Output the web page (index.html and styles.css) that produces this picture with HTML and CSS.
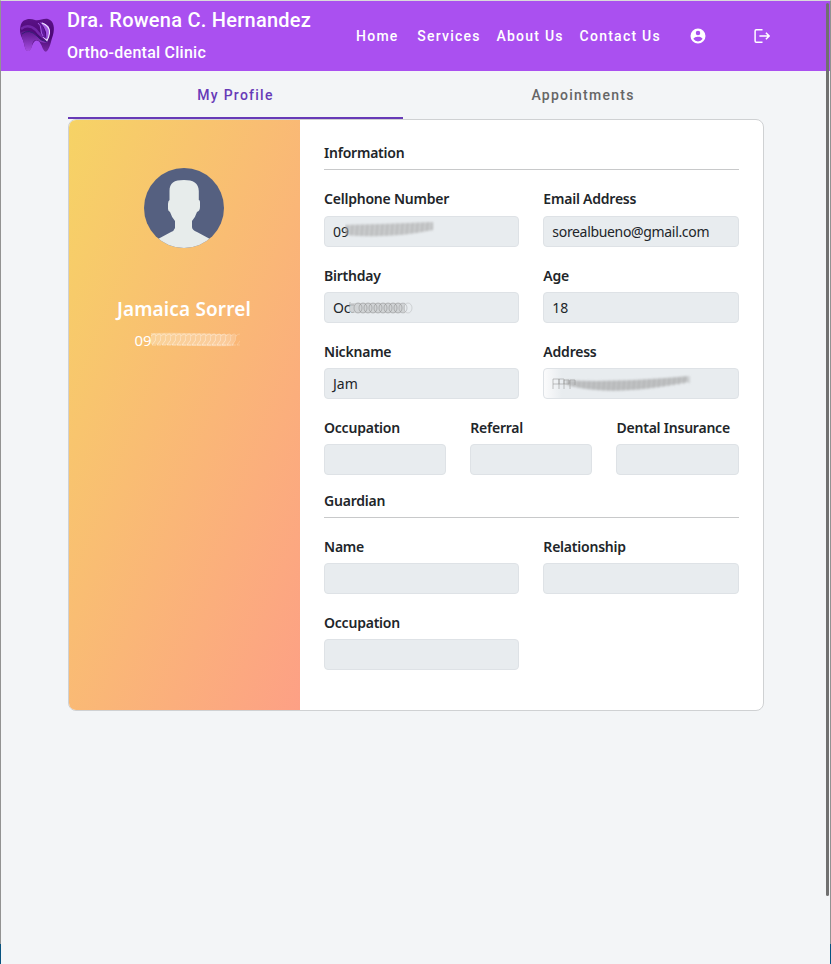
FILE: index.html
```html
<!DOCTYPE html>
<html lang="en">
<head>
<meta charset="utf-8">
<title>Dra. Rowena C. Hernandez</title>
<link rel="stylesheet" href="styles.css">
</head>
<body>
<div class="app">
  <header class="navbar">
    <svg class="logo" viewBox="0 0 36 36">
      <defs>
        <linearGradient id="tooth" x1="0" y1="0" x2="0" y2="1"><stop offset="0" stop-color="#5b1287"/><stop offset=".55" stop-color="#4b0775"/><stop offset="1" stop-color="#782aa4"/></linearGradient>
        <linearGradient id="root" x1="0" y1="0" x2="0" y2="1"><stop offset="0" stop-color="#5b1589"/><stop offset="1" stop-color="#a64de2"/></linearGradient>
      </defs>
      <path d="M1.500 8C3 1 10 0 16 2C20 3 25 0 29 1C35 3 36 10 34 17C32 23 31 30 28 33Q26 35 24 31C22 26 20 21 16 23C13 25 13 31 10 33C5 34 6 25 3 20Q0 14 1.500 8Z" fill="url(#tooth)"/>
      <path d="M2 14Q12 10 19 19C21 22 23 22 29 24Q23 26 18 22C11 22 15 31 10 33C5 34 6 25 3 20Z" fill="url(#root)"/>
      <path d="M2 11Q9 5 17 12Q22 19 28 21" fill="none" stroke="#7226a8" stroke-width="2.500"/>
      <path d="M3 16Q10 10 18 18Q22 23 28 24" fill="none" stroke="#351e75" stroke-width="1"/>
      <path d="M21 4Q31 6 31 14Q30 19 28 23Q27 19 27 14Q25 8 21 4Z" fill="#a45be3"/>
      <path d="M23 5Q31 8 30.500 15Q30 19 28 22.500Q26 20.500 24 18.500" fill="none" stroke="#eee5ff" stroke-width="1.100"/>
      <path d="M20 4Q26 9 27 21Q20 17 22 11Q22 7 20 4Z" fill="#6218a0"/>
      <path d="M19 5Q22 7 22 12Q22 15 24 18" fill="none" stroke="#a45be3" stroke-width="1"/>
    </svg>
    <div class="brand">
      <div class="brand-name">Dra. Rowena C. Hernandez</div>
      <div class="brand-sub">Ortho-dental Clinic</div>
    </div>
    <nav class="links"><a>Home</a><a>Services</a><a>About Us</a><a>Contact Us</a></nav>
    <svg class="icon account" viewBox="0 0 24 24"><path fill="#fff" fill-rule="evenodd" d="M12 2a10 10 0 1 0 0 20 10 10 0 0 0 0-20zm0 3a3 3 0 1 1 0 6 3 3 0 0 1 0-6zm0 14.200a7.200 7.200 0 0 1-6-3.220c.03-1.990 4-3.080 6-3.080s5.970 1.090 6 3.080a7.200 7.200 0 0 1-6 3.220z"/></svg>
    <svg class="icon logout" viewBox="0 0 16 16"><path d="M8.500 1.800H2.200Q1.100 1.800 1.100 2.900V13.100Q1.100 14.200 2.200 14.200H8.500M5.400 8H15M11.900 4.800 15.100 8l-3.200 3.200" fill="none" stroke="#fff" stroke-width="1.500"/></svg>
  </header>
  <div class="tabs"><div class="tab active">My Profile</div><div class="tab">Appointments</div></div>
  <main class="card">
    <aside class="profile">
      <svg class="avatar" viewBox="0 0 80 80">
        <clipPath id="disc"><circle cx="40" cy="40" r="40"/></clipPath>
        <g clip-path="url(#disc)"><path fill="#556080" d="M0 0h80v80H0z"/><path fill="#e7eceb" d="M40 12C30 12 25.500 15 25.500 23V32Q24 33 24 36V41Q24 43 26 44Q28 50 31 53V60Q30 63 27 64L14 71V80H66V71L53 64Q48 62 48 59V53Q51 50 53 44Q56 43 56 39V34Q56 32 54.800 32V23C54.800 15 49 12 40 12Z"/></g>
      </svg>
      <div class="name">Jamaica Sorrel</div>
      <div class="phone"><span>09</span><svg class="smudge" viewBox="0 0 92 16"><defs><pattern id="loops" width="5" height="16" patternUnits="userSpaceOnUse"><path d="M0 4Q4 0 5 4T1 13H5" fill="none" stroke="#fff" stroke-opacity=".4"/></pattern><linearGradient id="fade"><stop offset="0" stop-color="#fff"/><stop offset=".8" stop-color="#fff"/><stop offset="1" stop-color="#555"/></linearGradient><mask id="fademask"><path d="M0 0H92V16H0Z" fill="url(#fade)"/></mask></defs><g mask="url(#fademask)"><path d="M0 1Q40 0 86 3L82 14Q45 15 0 12Z" fill="#fff" opacity=".28"/><path d="M0 1H89V15H0Z" fill="url(#loops)"/></g></svg></div>
    </aside>
    <section class="form">
      <h2>Information</h2>
      <div class="row first">
        <div class="field"><label>Cellphone Number</label><div class="input"><span>09</span><svg class="smudge s-phone" viewBox="0 0 90 20"><defs><pattern id="bars" width="5" height="20" patternUnits="userSpaceOnUse"><path d="M3 0L1 20" stroke="#999" stroke-width="1.500" opacity=".4"/></pattern><filter id="soft" x="-5%" y="-30%" width="110%" height="160%"><feGaussianBlur stdDeviation="1.300"/></filter></defs><g filter="url(#soft)"><path d="M0 5Q45 4 88 2V10Q45 19 0 15Z" fill="#aaa" opacity=".5"/><path d="M0 5Q45 4 88 2V10Q45 19 0 15Z" fill="url(#bars)"/></g></svg></div></div>
        <div class="field"><label>Email Address</label><div class="input"><span class="mail">sorealbueno@gmail.com</span></div></div>
      </div>
      <div class="row">
        <div class="field"><label>Birthday</label><div class="input"><span class="birth">Oc</span><svg class="smudge s-birth" viewBox="0 0 64 16"><g fill="none" stroke="#777" stroke-opacity=".45"><path d="M1 2V11Q3 14 5 12M0 5H5"/><ellipse cx="9" cy="8" rx="4" ry="5"/><ellipse cx="14" cy="8" rx="4" ry="5"/><ellipse cx="19" cy="8" rx="4" ry="5"/><ellipse cx="24" cy="8" rx="4" ry="5"/><ellipse cx="29" cy="8" rx="4" ry="5"/><ellipse cx="34" cy="8" rx="4" ry="5"/><ellipse cx="39" cy="8" rx="4" ry="5"/><ellipse cx="44" cy="8" rx="4" ry="5"/><ellipse cx="49" cy="8" rx="4" ry="5"/><ellipse cx="54" cy="8" rx="4" ry="5" opacity=".7"/><ellipse cx="59" cy="8" rx="4" ry="5" opacity=".5"/></g><path d="M2 3H56V13H2Z" fill="#999" opacity=".3"/></svg></div></div>
        <div class="field"><label>Age</label><div class="input"><span>18</span></div></div>
      </div>
      <div class="row">
        <div class="field"><label>Nickname</label><div class="input"><span>Jam</span></div></div>
        <div class="field"><label>Address</label><div class="input hidden-address"><svg class="smudge s-address" viewBox="0 0 145 22"><path d="M1 16V6H7V11H1M7 16V6h5v5H7M12 16V7h5v4h-5M18 16V7h5v5" fill="none" stroke="#888" stroke-opacity=".5"/><g filter="url(#soft)"><path d="M14 7Q60 10 136 3V9Q80 20 45 17Q22 15 14 11Z" fill="#999" opacity=".5"/><path d="M14 7Q60 10 138 3V10Q80 20 45 17Q22 15 14 11Z" fill="url(#bars)"/></g></svg></div></div>
      </div>
      <div class="row">
        <div class="field"><label>Occupation</label><div class="input"></div></div>
        <div class="field"><label>Referral</label><div class="input"></div></div>
        <div class="field"><label>Dental Insurance</label><div class="input"></div></div>
      </div>
      <h2 class="second">Guardian</h2>
      <div class="row">
        <div class="field"><label>Name</label><div class="input"></div></div>
        <div class="field"><label>Relationship</label><div class="input"></div></div>
      </div>
      <div class="row half">
        <div class="field"><label>Occupation</label><div class="input"></div></div>
      </div>
    </section>
  </main>
  <div class="scrollbar"></div>
</div>
</body>
</html>
```
FILE: styles.css
```css
* { box-sizing: border-box; }
body { margin: 0; background: #f3f4f6; font-family: "Noto Sans", sans-serif; color: #212529; }
.app {
  position: relative;
  height: 964px;
  border: 1px solid #929292;
  border-top-color: #dadada;
  border-bottom: 0;
  background: #f3f5f7;
}
.app::before, .app::after {
  content: "";
  position: absolute;
  bottom: 0;
  width: 1px;
  height: 20px;
  background: #07527f;
}
.app::before { left: -1px; }
.app::after { right: -1px; }
.navbar { display: flex; align-items: center; height: 70px; padding-left: 18px; background: #aa50f0; color: #fff; font-family: Roboto, sans-serif; font-weight: 500; }
.logo { width: 36px; height: 36px; flex: none; }
.brand { width: 301px; padding: 1px 0 0 12px; flex: none; white-space: nowrap; }
.brand-name { font-size: 20px; line-height: 32px; letter-spacing: .25px; margin-top: -1px; }
.brand-sub { font-size: 16px; line-height: 33px; letter-spacing: .25px; }
.links { display: flex; width: 305px; flex: none; font-size: 14px; letter-spacing: 1.25px; white-space: nowrap; }
.links a:nth-child(1) { width: 61.5px; }
.links a:nth-child(2) { width: 79.5px; }
.links a:nth-child(3) { width: 83.5px; }
.icon { flex: none; }
.account { width: 18px; height: 18px; margin-left: 28px; }
.logout { width: 16px; height: 16px; margin-left: 47px; }
.tabs { display: flex; height: 48px; width: 695px; margin-left: 67px; font: 500 14px Roboto, sans-serif; letter-spacing: 1.25px; color: #666; }
.tab { flex: 0 0 360px; display: flex; align-items: center; justify-content: center; padding-top: 2px; border-bottom: 2px solid transparent; }
.tab.active { flex-basis: 335px; color: #673ab7; border-color: #673ab7; }
.card { display: flex; width: 696px; height: 592px; margin-left: 67px; border: 1px solid #cfd1d3; border-radius: 8px; background: #fff; overflow: hidden; }
.profile { width: 231px; flex: none; display: flex; flex-direction: column; align-items: center; padding: 48px 1px 0 0; color: #fff; background: linear-gradient(to right bottom, #f6d365, #fda085); }
.avatar { width: 80px; height: 80px; }
.name { margin-top: 46px; font-size: 19px; line-height: 30px; font-weight: 600; letter-spacing: .15px; }
.phone { display: flex; align-items: center; height: 24px; margin-top: 4px; margin-left: 9px; font-size: 15px; }
.phone .smudge { width: 92px; height: 16px; margin-left: -1px; }
.form { flex: 1; padding: 22px 24.300px 0 24px; }
h2 { margin: 0 0 18px; padding-bottom: 5px; border-bottom: 1px solid #c8c9ca; font-size: 14px; line-height: 22px; font-weight: 600; letter-spacing: -.22px; }
h2.second { margin: -2px 0 17px; }
.row { display: flex; gap: 24px; margin-bottom: 17px; }
.field { flex: 1; min-width: 0; }
.half .field { flex: 0 0 195px; }
label { display: block; height: 22px; margin-bottom: 6px; font-size: 14px; line-height: 24px; font-weight: 600; letter-spacing: -.22px; white-space: nowrap; }
.first label { line-height: 22px; }
.input { display: flex; align-items: center; height: 31px; padding: 0 8px; border: 1px solid #dee2e6; border-radius: 4px; background: #e8ecef; font-size: 14px; }
.mail { letter-spacing: -.33px; }
.birth { letter-spacing: -.3px; }
.s-phone { width: 90px; height: 20px; margin-left: -4px; margin-top: -3px; }
.s-birth { width: 64px; height: 16px; margin-left: -1px; }
.s-address { width: 145px; height: 22px; }
.hidden-address { background: linear-gradient(to right, #fbfbfc, #e8ecef 18px); }
.scrollbar { position: absolute; top: 2px; right: 1px; width: 3px; height: 893px; border-radius: 2px; background: #707070; }
```
